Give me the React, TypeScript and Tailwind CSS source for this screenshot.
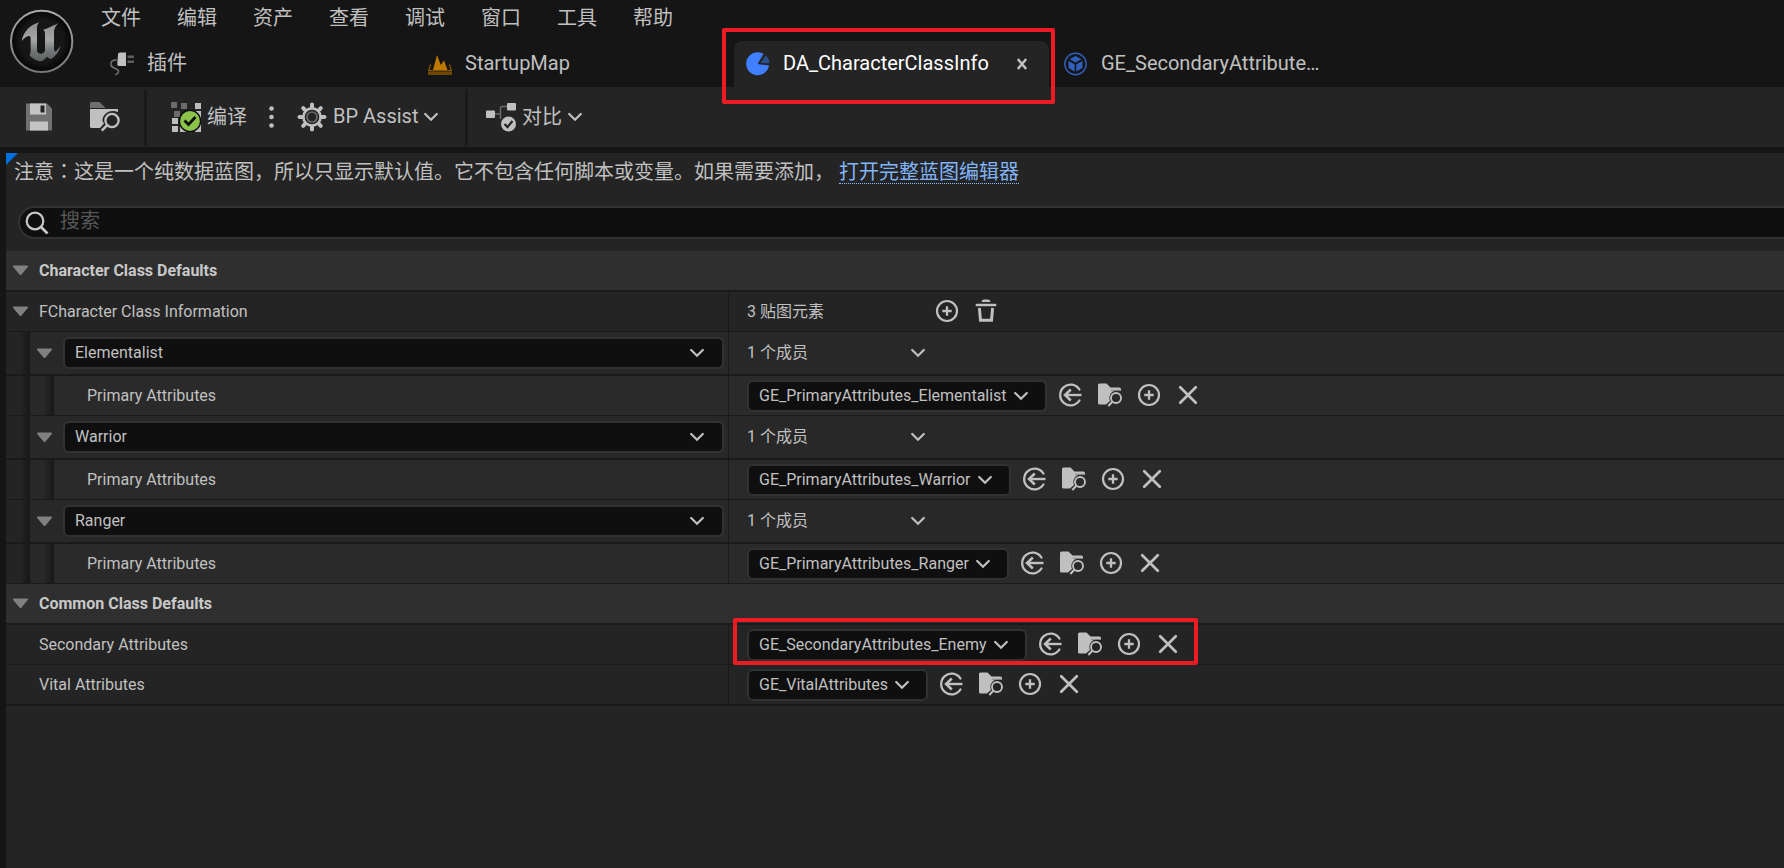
import React, { useState } from "react";

type IconProps = { className?: string };

const CLASS_NAMES = ["Elementalist", "Warrior", "Ranger"];
const MENU = ["文件", "编辑", "资产", "查看", "调试", "窗口", "工具", "帮助"];

function EngineLogo() {
  return (
    <svg viewBox="0 0 228 228" className="size-[76px]" aria-hidden="true">
      <defs>
        <linearGradient id="ring" x1="0" y1="0" x2="0" y2="1">
          <stop offset="0" stopColor="#a8a8a8" />
          <stop offset="0.5" stopColor="#8f9292" />
          <stop offset="1" stopColor="#737878" />
        </linearGradient>
        <linearGradient id="letter" x1="0" y1="0" x2="0" y2="1">
          <stop offset="0" stopColor="#8c8e8f" />
          <stop offset="0.45" stopColor="#a4a6a7" />
          <stop offset="0.75" stopColor="#6f7475" />
          <stop offset="1" stopColor="#5c6162" />
        </linearGradient>
        <radialGradient id="disc" cx="0.5" cy="0.5" r="0.5">
          <stop offset="0.7" stopColor="#161616" />
          <stop offset="1" stopColor="#040404" />
        </radialGradient>
      </defs>
      <circle cx="113" cy="112" r="92" fill="url(#disc)" stroke="url(#ring)" strokeWidth="6" />
      <path
        fill="url(#letter)"
        d="M53 111C58 86 76 62 106 55C99 62 98 70 99 80V138C99 146 106 150 112 149C117 148 121 144 123 140V90C123 82 121 79 117 77C130 74 150 64 164 57C155 65 150 74 150 84V136C151 145 156 146 169 126C165 145 153 158 140 166L128 158C124 164 119 169 112 172C98 171 82 162 76 152C79 150 80 146 80 140V104C80 92 70 92 53 111Z"
      />
    </svg>
  );
}

function PlugIcon() {
  return (
    <svg viewBox="0 0 24 24" className="size-6 shrink-0" fill="none" aria-hidden="true">
      <path d="M7 8C2.500 7.500 0.500 10 1 13C2 17.500 9.500 15.500 8.500 20C8 21.500 7 22.300 5 22.800" stroke="#6f6f6f" strokeWidth="1.600" />
      <path d="M10 0.500H16V14H9C7.800 14 7.200 13.200 7.300 12L8 2.500C8.100 1.200 8.800 0.500 10 0.500Z" fill="#c0c0c0" />
      <path d="M17.500 3.500H24V6H17.500zM17.500 8.500H24V11H17.500z" fill="#5e5e5e" />
    </svg>
  );
}

function LevelIcon() {
  return (
    <svg viewBox="0 0 24 24" className="size-6 shrink-0" aria-hidden="true">
      <path d="M5 18L9 3L12.800 13L16 8.500L19.500 18Z" fill="#bf7900" />
      <path d="M0 19.500H24V23H0z" fill="#6e4702" />
      <path d="M2.500 12.500L0.800 18.500M21.500 12.500L23.200 18.500" stroke="#8a5802" strokeWidth="1.200" />
      <path d="M0 18.600H24" stroke="#a86b03" strokeWidth="0.800" />
    </svg>
  );
}

function PieIcon() {
  return (
    <svg viewBox="0 0 24 24" className="size-6 shrink-0" aria-hidden="true">
      <path d="M11.700 12L17.500 1.800A11.500 11.500 0 1 0 23 13.600Z" fill="#407fff" />
      <path d="M14.500 11L19.800 3.500A11 11 0 0 1 23.500 11.300Z" fill="#2c4f8f" />
    </svg>
  );
}

function BlueprintIcon() {
  return (
    <svg viewBox="0 0 24 24" className="size-6 shrink-0" aria-hidden="true">
      <circle cx="11.500" cy="12" r="10.700" fill="none" stroke="#315fbd" strokeWidth="1.400" />
      <path d="M11.500 4L17.500 7.300L11.500 10.600L5.500 7.300ZM4.500 8.900L10.700 12.200V19.500L4.500 16ZM18.500 8.900L12.300 12.200V19.500L18.500 16Z" fill="#315fbd" />
    </svg>
  );
}

function SaveIcon() {
  return (
    <svg viewBox="0 0 28 28" className="size-7" aria-hidden="true">
      <path d="M0 0.500H21L26 5.500V27.500H0z" fill="#717171" />
      <path d="M4 0.500H20V11.500H4zM4 18.500H22V27.500H4z" fill="#c4c4c4" />
      <path d="M14.500 2.500H18.500V9.500H14.500z" fill="#242424" />
    </svg>
  );
}

function BrowseIcon() {
  return (
    <svg viewBox="0 0 30 30" className="size-[30px]" fill="none" aria-hidden="true">
      <path d="M0 1.500Q0 0 1.500 0H9.500L15.500 6H0z" fill="#6f6f6f" />
      <path d="M0 7H28V10C20 6.500 12 12 12.500 19L14 21.500L10 26H1.500Q0 26 0 24.500z" fill="#c0c0c0" />
      <circle cx="22" cy="18.500" r="6.600" stroke="#c0c0c0" strokeWidth="2.300" />
      <path d="M17.200 23.200L11.800 28.600" stroke="#c0c0c0" strokeWidth="2.600" />
    </svg>
  );
}

function CompileIcon() {
  return (
    <svg viewBox="0 0 30 30" className="size-[30px]" fill="none" aria-hidden="true">
      <path d="M0 0H6V6H0zM10 1H16V7H10zM3 9H9V15H3z" fill="#6b6b6b" />
      <path d="M24 1H30V7H24zM24 9H30V30H24zM1 16H7V22H1zM1 24H7V30H1zM9 24H15V30H9z" fill="#bdbdbd" />
      <circle cx="19" cy="19" r="10.600" fill="#8bc34a" stroke="#0c0c0c" strokeWidth="1.400" />
      <path d="M13.500 18.500L17.500 22.500L24.500 15" stroke="#0c0c0c" strokeWidth="2.800" />
    </svg>
  );
}

function GearIcon() {
  return (
    <svg viewBox="0 0 30 30" className="size-[30px]" fill="none" aria-hidden="true">
      <g stroke="#c0c0c0" strokeWidth="4" strokeLinecap="round">
        <path d="M15 2.500V6M15 24V27.500M2.500 15H6M24 15H27.500M6.200 6.200L8.600 8.600M21.400 21.400L23.800 23.800M6.200 23.800L8.600 21.400M21.400 8.600L23.800 6.200" />
      </g>
      <circle cx="15" cy="15" r="8.600" fill="#242424" stroke="#c0c0c0" strokeWidth="2.600" />
      <circle cx="15" cy="15" r="5" stroke="#6b6b6b" strokeWidth="1.700" />
    </svg>
  );
}

function DiffIcon() {
  return (
    <svg viewBox="0 0 30 30" className="size-[30px]" fill="none" aria-hidden="true">
      <path d="M9 12H15M14.500 17V6.500Q14.500 4.500 16.500 4.500H22" stroke="#6b6b6b" strokeWidth="1.500" />
      <rect x="0" y="8.500" width="9" height="7.500" rx="1" fill="#c0c0c0" />
      <rect x="21" y="1" width="9" height="7.500" rx="1" fill="#c0c0c0" />
      <circle cx="22.500" cy="22" r="7.500" fill="#c0c0c0" />
      <path d="M18.500 22L21.500 25L26.500 19" stroke="#242424" strokeWidth="2.200" />
    </svg>
  );
}

function Chevron({ className = "" }: IconProps) {
  return (
    <svg viewBox="0 0 14 14" className={"size-[14px] shrink-0 " + className} fill="none" aria-hidden="true">
      <path d="M1.200 4L7 9.800L12.800 4" stroke="#c0c0c0" strokeWidth="2.200" strokeLinecap="round" />
    </svg>
  );
}

function UseIcon() {
  return (
    <svg viewBox="0 0 24 24" className="size-6" fill="none" stroke="#c0c0c0" aria-hidden="true">
      <path d="M20.400 6.500A10.400 10.400 0 1 0 20.400 17.500" strokeWidth="2.300" strokeLinecap="round" />
      <path d="M6 12H22.500" strokeWidth="2.400" />
      <path d="M11.800 6.500L6 12L11.800 17.500" strokeWidth="2.500" />
    </svg>
  );
}

function FindIcon() {
  return (
    <svg viewBox="0 0 24 24" className="size-6" fill="none" aria-hidden="true">
      <path d="M0 2Q0 0.500 1.500 0.500H8.500L12.500 4.500H21.500Q23 4.500 23 6V8C21 7 18 7 16 8C12 10 10.500 14 12 18L8 21.500H1.500Q0 21.500 0 20z" fill="#c0c0c0" />
      <path d="M13 7.300H23" stroke="#8a8a8a" strokeWidth="1" />
      <circle cx="18" cy="15" r="5" stroke="#c0c0c0" strokeWidth="1.900" />
      <path d="M14.500 18.500L10.300 23" stroke="#c0c0c0" strokeWidth="2" />
    </svg>
  );
}

function AddIcon() {
  return (
    <svg viewBox="0 0 24 24" className="size-6" fill="none" stroke="#c0c0c0" strokeWidth="2.200" aria-hidden="true">
      <circle cx="12" cy="12" r="10" />
      <path d="M12 7.300V16.700M7.300 12H16.700" strokeWidth="2.300" />
    </svg>
  );
}

function ClearIcon() {
  return (
    <svg viewBox="0 0 24 24" className="size-6" fill="none" stroke="#c0c0c0" aria-hidden="true">
      <path d="M4.200 4.200L19.800 19.800M19.800 4.200L4.200 19.800" strokeWidth="2.700" strokeLinecap="round" />
    </svg>
  );
}

function TrashIcon() {
  return (
    <svg viewBox="0 0 24 24" className="size-6" fill="none" aria-hidden="true">
      <path d="M7.500 3C8 1.200 9 0.500 10 0.500H14C15 0.500 16 1.200 16.500 3z" fill="#c0c0c0" />
      <path d="M2.800 6H21.200" stroke="#c0c0c0" strokeWidth="2.500" strokeLinecap="round" />
      <path d="M5.400 9L6.500 21.300H17.500L18.600 9" stroke="#c0c0c0" strokeWidth="3" />
    </svg>
  );
}

function Expander({ label }: { label: string }) {
  return (
    <button type="button" aria-label={"展开 " + label} className="flex size-[17px] shrink-0 items-center justify-center">
      <svg viewBox="0 0 17 11" className="h-[11px] w-[17px]" aria-hidden="true">
        <path d="M2 0.500H15Q17 0.500 15.800 2L9.500 9.500Q8.500 10.500 7.500 9.500L1.200 2Q0 0.500 2 0.500z" fill="#808080" />
      </svg>
    </button>
  );
}

function IconButton({ label, children }: { label: string; children: React.ReactNode }) {
  return (
    <button type="button" aria-label={label} className="size-6 shrink-0">
      {children}
    </button>
  );
}

function Indent({ levels }: { levels: number }) {
  return (
    <div className="flex self-stretch" aria-hidden="true">
      {Array.from({ length: levels }, (_, i) => (
        <div key={i} className={(i === 0 ? "bg-[#242424]" : "bg-[#282828]") + " flex w-6 justify-end"}>
          <div className="w-2.5 bg-linear-to-r from-transparent to-[#171717]" />
        </div>
      ))}
    </div>
  );
}

function Category({ title }: { title: string }) {
  return (
    <div className="flex h-[41px] items-center gap-2.5 border-b-2 border-[#1a1a1a] bg-[#2f2f2f] pl-1.5">
      <Expander label={title} />
      <h2 className="text-base font-bold text-[#c8c8c8]">{title}</h2>
    </div>
  );
}

type RowProps = { levels?: number; thick?: boolean; name: React.ReactNode; children: React.ReactNode };

function Row({ levels = 0, thick = false, name, children }: RowProps) {
  return (
    <div
      className={
        "grid grid-cols-[722px_1fr] border-[#1a1a1a] " +
        (thick ? "border-b-2 " : "border-b ") +
        (levels === 1 ? "h-11 bg-[#282828]" : levels === 2 ? "h-10 bg-[#2a2a2a]" : thick ? "h-[41px] bg-[#242424]" : "h-10 bg-[#242424]")
      }
    >
      <div className="flex min-w-0 items-center">
        <Indent levels={levels} />
        {name}
      </div>
      <div className="flex min-w-0 items-center border-l border-[#1a1a1a] pl-[18px]">{children}</div>
    </div>
  );
}

function AssetPicker({ id, value, marked = false }: { id: string; value: string; marked?: boolean }) {
  return (
    <div className="relative flex items-center gap-3">
      <div className="relative flex items-center">
        <select
          id={id}
          defaultValue={value}
          className="h-8 appearance-none rounded-md border-2 border-[#323232] bg-[#0f0f0f] pr-[38px] pl-2.5 text-base text-[#c0c0c0]"
        >
          <option>{value}</option>
        </select>
        <Chevron className="pointer-events-none absolute right-[19px]" />
      </div>
      <div className="flex items-center gap-[15px] pb-px">
        <IconButton label="使用所选资产"><UseIcon /></IconButton>
        <IconButton label="浏览到资产"><FindIcon /></IconButton>
        <IconButton label="新建资产"><AddIcon /></IconButton>
        <IconButton label="清除"><ClearIcon /></IconButton>
      </div>
      {marked && <div className="pointer-events-none absolute -top-[11px] -right-[18px] -bottom-1 -left-[14px] rounded-xs border-4 border-[#ed1c24]" />}
    </div>
  );
}

function ClassEntry({ name }: { name: string }) {
  const [key, setKey] = useState(name);
  const id = "primary-" + name;
  return (
    <>
      <Row
        levels={1}
        thick
        name={
          <div className="flex min-w-0 flex-1 items-center gap-2.5 pr-1 pl-1.5">
            <Expander label={name} />
            <div className="relative flex flex-1 items-center">
              <select
                aria-label="键"
                value={key}
                onChange={(e) => setKey(e.target.value)}
                className="h-8 w-full appearance-none rounded-md border-2 border-[#323232] bg-[#0f0f0f] pl-2.5 text-base text-[#c0c0c0]"
              >
                {CLASS_NAMES.map((c) => (
                  <option key={c}>{c}</option>
                ))}
              </select>
              <Chevron className="pointer-events-none absolute right-5" />
            </div>
          </div>
        }
      >
        <span className="w-[164px]">1 个成员</span>
        <button type="button" aria-label="成员选项" className="flex">
          <Chevron />
        </button>
      </Row>
      <Row levels={2} name={<label htmlFor={id} className="pl-[33px]">Primary Attributes</label>}>
        <AssetPicker id={id} value={"GE_PrimaryAttributes_" + name} />
      </Row>
    </>
  );
}

function Tab({ icon, title }: { icon: React.ReactNode; title: string }) {
  return (
    <button type="button" className="flex w-[318px] shrink-0 items-center gap-[13px] pl-3">
      {icon}
      <span className="pb-0.5">{title}</span>
    </button>
  );
}

export default function App() {
  return (
    <div className="flex min-h-screen flex-col overflow-x-hidden bg-[#151515] font-[Roboto,'Noto_Sans_CJK_SC',sans-serif] text-[#c0c0c0]">
      <header className="flex h-[87px] text-xl">
        <div className="w-[98px] shrink-0 pt-1 pl-1">
          <EngineLogo />
        </div>
        <div className="flex min-w-0 flex-1 flex-col">
          <nav className="flex h-[41px] gap-9 pb-1.5 pl-[3px]">
            {MENU.map((m) => (
              <button key={m} type="button">{m}</button>
            ))}
          </nav>
          <div className="flex flex-1">
            <Tab icon={<PlugIcon />} title="插件" />
            <Tab icon={<LevelIcon />} title="StartupMap" />
            <div className="relative mr-[3px] flex w-[315px] shrink-0 items-center rounded-t-lg bg-[#242424] pr-[22px] pl-3">
              <button type="button" className="flex flex-1 items-center gap-[13px] text-white">
                <PieIcon />
                <span className="pb-0.5">DA_CharacterClassInfo</span>
              </button>
              <button type="button" aria-label="关闭">
                <svg viewBox="0 0 10 12" className="h-3 w-2.5" fill="none" aria-hidden="true">
                  <path d="M0.800 1L9.200 11M9.200 1L0.800 11" stroke="#c0c0c0" strokeWidth="2.400" />
                </svg>
              </button>
              <div className="pointer-events-none absolute -top-[13px] -right-[6px] -bottom-[17px] -left-3 rounded-xs border-4 border-[#ed1c24]" />
            </div>
            <Tab icon={<BlueprintIcon />} title="GE_SecondaryAttribute…" />
          </div>
        </div>
      </header>

      <div className="flex h-[60px] items-center bg-[#242424] text-xl">
        <div className="flex w-36 items-center gap-9 pl-[26px]">
          <button type="button" aria-label="保存"><SaveIcon /></button>
          <button type="button" aria-label="浏览"><BrowseIcon /></button>
        </div>
        <div className="h-[57px] w-[3px] bg-[#1a1a1a]" />
        <div className="flex w-[318px] items-center pl-6">
          <button type="button" className="flex items-center gap-1.5">
            <CompileIcon />
            编译
          </button>
          <button type="button" aria-label="编译选项" className="ml-[22px]">
            <svg viewBox="0 0 5 22" className="h-[22px] w-[5px]" fill="#c0c0c0" aria-hidden="true">
              <circle cx="2.500" cy="2.500" r="2.300" />
              <circle cx="2.500" cy="11" r="2.300" />
              <circle cx="2.500" cy="19.500" r="2.300" />
            </svg>
          </button>
          <button type="button" className="ml-[23px] flex items-center gap-1.5">
            <GearIcon />
            <span className="pb-0.5">BP Assist</span>
            <Chevron />
          </button>
        </div>
        <div className="h-[57px] w-[3px] bg-[#1a1a1a]" />
        <button type="button" className="ml-[18px] flex items-center gap-1.5">
          <DiffIcon />
          对比
          <Chevron />
        </button>
      </div>

      <main className="mt-1.5 ml-1.5 flex-1 bg-[#242424] text-base">
        <div className="relative flex h-[53px] pt-0.5 pl-2 text-xl">
          <svg viewBox="0 0 12 12" className="absolute top-0 left-0 size-3" aria-hidden="true">
            <path d="M0 0H12L0 12Z" fill="#0070e0" />
          </svg>
          <p className="h-8 leading-8 whitespace-nowrap">
            注意<span className="font-['Noto_Sans_CJK_TC',sans-serif]">：</span>这是一个纯数据蓝图，所以只显示默认值。它不包含任何脚本或变量。如果需要添加，{" "}
            <a href="#editor" className="inline-block h-7 border-b border-dotted border-[#8ebfff] leading-8 text-[#82b4f8]">打开完整蓝图编辑器</a>
          </p>
        </div>
        <label className="ml-3 flex h-[33px] items-center gap-[11px] rounded-l-full border-2 border-r-0 border-[#323232] bg-[#0f0f0f] pl-[5px]">
          <svg viewBox="0 0 24 24" className="size-6 shrink-0" fill="none" stroke="#c8c8c8" aria-hidden="true">
            <circle cx="10" cy="10" r="8.300" strokeWidth="2.200" />
            <path d="M16 16L22.500 22.500" strokeWidth="2.600" />
          </svg>
          <input aria-label="搜索" placeholder="搜索" className="min-w-0 flex-1 bg-transparent pb-[3px] text-xl outline-none placeholder:text-[#575757]" />
        </label>

        <div className="mt-3">
          <Category title="Character Class Defaults" />
          <Row
            name={
              <div className="flex items-center gap-2.5 pl-1.5">
                <Expander label="FCharacter Class Information" />
                FCharacter Class Information
              </div>
            }
          >
            <span className="w-[188px]">3 贴图元素</span>
            <div className="flex gap-[15px] pb-px">
              <IconButton label="添加元素"><AddIcon /></IconButton>
              <IconButton label="清空"><TrashIcon /></IconButton>
            </div>
          </Row>
          {CLASS_NAMES.map((c) => (
            <ClassEntry key={c} name={c} />
          ))}
          <Category title="Common Class Defaults" />
          <Row name={<label htmlFor="secondary" className="pl-[33px]">Secondary Attributes</label>}>
            <AssetPicker id="secondary" value="GE_SecondaryAttributes_Enemy" marked />
          </Row>
          <Row thick name={<label htmlFor="vital" className="pl-[33px]">Vital Attributes</label>}>
            <AssetPicker id="vital" value="GE_VitalAttributes" />
          </Row>
        </div>
      </main>
    </div>
  );
}
